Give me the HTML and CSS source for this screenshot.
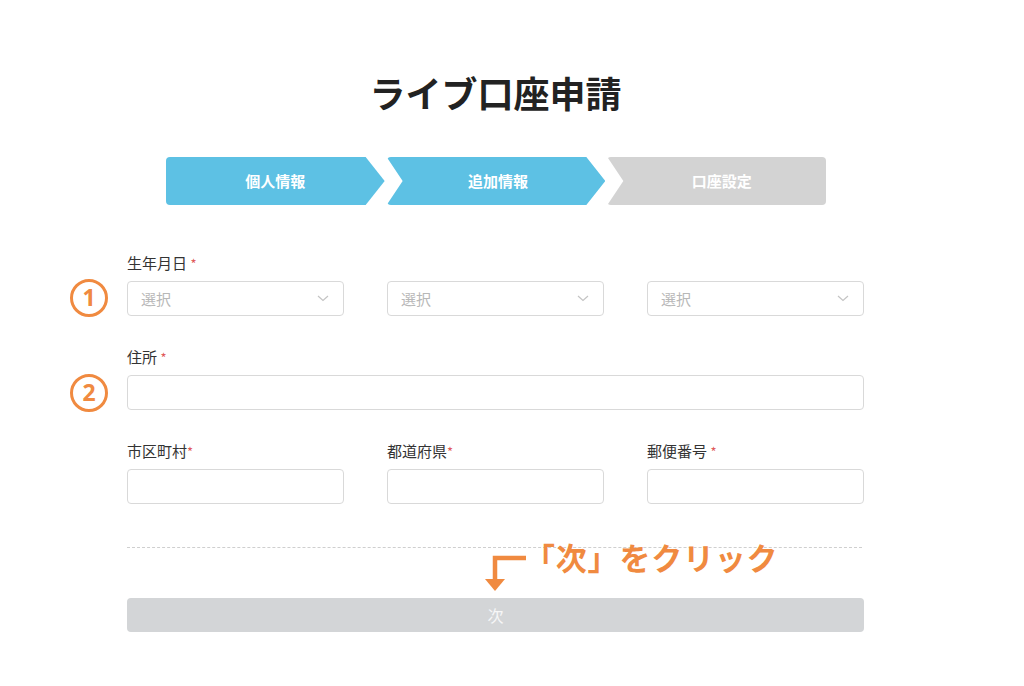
FILE: index.html
```html
<!DOCTYPE html>
<html lang="ja">
<head>
<meta charset="utf-8">
<title>ライブ口座申請</title>
<link rel="stylesheet" href="styles.css">
</head>
<body>
<div class="page">
  <h1 class="title">ライブ口座申請</h1>
  <div class="steps">
    <div class="step step-first active">個人情報</div>
    <div class="step step-mid active">追加情報</div>
    <div class="step step-last">口座設定</div>
  </div>

  <form class="form">
    <div class="field-block">
      <span class="badge badge-1">1</span>
      <div class="label">生年月日 <span class="req">*</span></div>
      <div class="row3">
        <div class="select"><span class="ph">選択</span><svg class="chev" width="12" height="7" viewBox="0 0 12 7"><path d="M1 1l5 4.5L11 1" fill="none" stroke="#c4c4c4" stroke-width="1.2"/></svg></div>
        <div class="select"><span class="ph">選択</span><svg class="chev" width="12" height="7" viewBox="0 0 12 7"><path d="M1 1l5 4.5L11 1" fill="none" stroke="#c4c4c4" stroke-width="1.2"/></svg></div>
        <div class="select"><span class="ph">選択</span><svg class="chev" width="12" height="7" viewBox="0 0 12 7"><path d="M1 1l5 4.5L11 1" fill="none" stroke="#c4c4c4" stroke-width="1.2"/></svg></div>
      </div>
    </div>

    <div class="field-block">
      <span class="badge badge-2">2</span>
      <div class="label">住所 <span class="req">*</span></div>
      <div class="input"></div>
    </div>

    <div class="row3 field-block">
      <div>
        <div class="label">市区町村<span class="req">*</span></div>
        <div class="input"></div>
      </div>
      <div>
        <div class="label">都道府県<span class="req">*</span></div>
        <div class="input"></div>
      </div>
      <div>
        <div class="label">郵便番号 <span class="req">*</span></div>
        <div class="input"></div>
      </div>
    </div>

    <div class="divider"></div>

    <div class="submit-wrap">
      <svg class="note-arrow" width="44" height="40" viewBox="0 0 44 40"><path d="M42 5H11V27" fill="none" stroke="#f08a40" stroke-width="4.5"/><path d="M1 26h20l-10 12z" fill="#f08a40"/></svg>
      <span class="note-text">「次」をクリック</span>
      <button type="button" class="submit">次</button>
    </div>
  </form>
</div>
</body>
</html>
```

FILE: styles.css
```css
* { box-sizing: border-box; }
html, body { margin: 0; padding: 0; background: #fff; }
body {
  font-family: "Noto Sans CJK JP", "Noto Sans", sans-serif;
  color: #333;
}
.page {
  width: 737px;
  margin-left: 127px;
  padding-top: 70px;
}
.title {
  margin: 0;
  height: 44px;
  line-height: 44px;
  font-size: 36px;
  font-weight: 700;
  color: #222;
  text-align: center;
}
.steps {
  display: flex;
  gap: 2px;
  margin: 43px 38px 0 39px;
  height: 48px;
}
.step {
  width: 219px;
  height: 48px;
  line-height: 48px;
  text-align: center;
  color: #fff;
  font-size: 15px;
  font-weight: 700;
  background: #d3d3d3;
  border-radius: 4px;
}
.step.active { background: #5dc1e4; }
.step-first {
  clip-path: polygon(0 0, calc(100% - 19px) 0, 100% 50%, calc(100% - 19px) 100%, 0 100%);
}
.step-mid {
  clip-path: polygon(0 0, calc(100% - 19px) 0, 100% 50%, calc(100% - 19px) 100%, 0 100%, 16px 50%);
  padding-left: 4px;
}
.step-last {
  clip-path: polygon(0 0, 100% 0, 100% 100%, 0 100%, 16px 50%);
  padding-left: 10px;
  font-weight: 600;
}
.form { margin-top: 48px; }
.field-block { position: relative; margin-bottom: 31px; }
.label {
  font-size: 15px;
  line-height: 20px;
  height: 20px;
  color: #333;
  margin-bottom: 8px;
}
.req { color: #e05a5a; font-size: 13px; }
.row3 {
  display: grid;
  grid-template-columns: 217px 217px 217px;
  column-gap: 43px;
}
.select, .input {
  height: 35px;
  border: 1px solid #d9d9d9;
  border-radius: 4px;
  background: #fff;
}
.select {
  display: flex;
  align-items: center;
  justify-content: space-between;
  padding: 0 14px 0 13px;
}
.ph { color: #b8b8b8; font-size: 15px; }
.badge {
  position: absolute;
  left: -57px;
  width: 38px;
  height: 38px;
  border: 3.5px solid #f08a40;
  border-radius: 50%;
  color: #f08a40;
  font-family: "Noto Sans", sans-serif;
  font-weight: 700;
  font-size: 23px;
  line-height: 31px;
  text-align: center;
}
.badge-1 { top: 26px; }
.badge-2 { top: 27px; }
.divider {
  border-top: 1px dashed #cfcfcf;
  margin-top: 43px;
  margin-right: 2px;
}
.submit-wrap {
  position: relative;
  padding-top: 50px;
}
.note-arrow {
  position: absolute;
  left: 357px;
  top: 5px;
}
.note-text {
  position: absolute;
  left: 397px;
  top: -10px;
  color: #f08a40;
  font-size: 31px;
  font-weight: 700;
  line-height: 38px;
  letter-spacing: 0.8px;
  white-space: nowrap;
}
.submit {
  display: block;
  width: 100%;
  height: 34px;
  border: 0;
  border-radius: 4px;
  background: #d3d5d7;
  color: #f7f7f7;
  font-family: inherit;
  font-size: 16px;
  padding: 0;
}
```
